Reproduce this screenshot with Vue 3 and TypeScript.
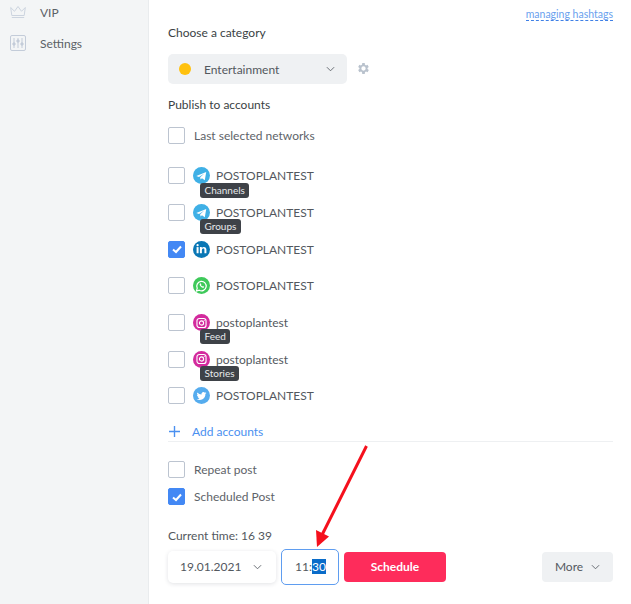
<script setup lang="ts">
interface Account { id: number; name: string; net: string; tag?: string; checked?: boolean }
const accounts: Account[] = [
  { id: 1, name: 'POSTOPLANTEST', net: 'telegram', tag: 'Channels' },
  { id: 2, name: 'POSTOPLANTEST', net: 'telegram', tag: 'Groups' },
  { id: 3, name: 'POSTOPLANTEST', net: 'linkedin', checked: true },
  { id: 4, name: 'POSTOPLANTEST', net: 'whatsapp' },
  { id: 5, name: 'postoplantest', net: 'instagram', tag: 'Feed' },
  { id: 6, name: 'postoplantest', net: 'instagram', tag: 'Stories' },
  { id: 7, name: 'POSTOPLANTEST', net: 'twitter' }
]
</script>

<template>
  <div class="page">
    <aside class="sidebar">
      <div class="nav-item vip">
        <svg class="nav-icon" viewBox="0 0 16 16" width="16" height="16" fill="none" stroke="#ccd4df" stroke-width="1">
          <path d="M.7 3.500 4.500 7.300 8 2.500 11.500 7.300 15.300 3.500 14.200 11.500H1.800Z" />
          <path d="M1.800 13.500H14.200" />
        </svg>
        <span>VIP</span>
      </div>
      <div class="nav-item">
        <svg class="nav-icon" viewBox="0 0 16 16" width="16" height="16" fill="none" stroke="#c3ccd9" stroke-width="1">
          <rect x="0.500" y="0.500" width="15" height="15" rx="1.500" />
          <path d="M4 3V13M8 3V13M12 3V13" />
          <circle cx="4" cy="9" r="1.200" fill="#c3ccd9" />
          <circle cx="8" cy="6" r="1.200" fill="#c3ccd9" />
          <circle cx="12" cy="9" r="1.200" fill="#c3ccd9" />
        </svg>
        <span>Settings</span>
      </div>
    </aside>

    <main class="main">
      <div class="hash-row"><a class="hash-link">managing hashtags</a></div>
      <div class="section-title category-title">Choose a category</div>
      <div class="category-row">
        <div class="select">
          <span class="dot"></span>
          <span class="select-label">Entertainment</span>
          <svg class="chev" viewBox="0 0 10 6" width="9" height="6" fill="none" stroke="#5b6168" stroke-width="1"><path d="M1 1 5 5 9 1" /></svg>
        </div>
        <svg class="gear" viewBox="2.500 1.500 21 21" width="13" height="13" fill="#b9c2cd">
          <path d="M19.400 13a7.500 7.500 0 0 0 0-2l2.100-1.600-2-3.400-2.500 1a7.500 7.500 0 0 0-1.700-1L15 3.300h-4l-.4 2.700a7.500 7.500 0 0 0-1.700 1l-2.500-1-2 3.400L6.500 11a7.500 7.500 0 0 0 0 2l-2.100 1.600 2 3.400 2.500-1a7.500 7.500 0 0 0 1.700 1l.4 2.700h4l.4-2.700a7.500 7.500 0 0 0 1.700-1l2.500 1 2-3.400ZM13 15.500a3.500 3.500 0 1 1 0-7 3.500 3.500 0 0 1 0 7Z" />
        </svg>
      </div>
      <div class="section-title publish-title">Publish to accounts</div>
      <div class="check-row last-row">
        <span class="box"></span>
        <span class="check-label">Last selected networks</span>
      </div>

      <ul class="accounts">
        <li v-for="a in accounts" :key="a.id" class="account">
          <span class="box" :class="{ on: a.checked }">
            <svg v-if="a.checked" viewBox="0 0 12 12" width="12" height="12" fill="none" stroke="#fff" stroke-width="2"><path d="M2 6.500 5 9 10 3.500" /></svg>
          </span>
          <span class="net" :class="a.net">
            <svg v-if="a.net === 'telegram'" viewBox="0 0 18 18" width="18" height="18"><path d="M3.500 9 14 4.800 12.500 13.500 9.500 11.300 8 12.800 7.600 10.400 12 6.300 6.300 10 Z" fill="#fff" /></svg>
            <svg v-else-if="a.net === 'linkedin'" viewBox="0 0 18 18" width="18" height="18" fill="#fff"><rect x="3.800" y="7" width="2.100" height="6.500" /><circle cx="4.850" cy="5" r="1.200" /><path d="M7.300 7h2v1c.5-.8 1.300-1.200 2.200-1.200 1.800 0 2.700 1.100 2.700 3v3.700h-2.100v-3.400c0-1-.4-1.500-1.200-1.500s-1.500.6-1.500 1.600v3.300H7.300Z" /></svg>
            <svg v-else-if="a.net === 'whatsapp'" viewBox="0 0 18 18" width="18" height="18" fill="none" stroke="#fff" stroke-width="1.300"><path d="M3.600 14.400 4.500 11.300A5 5 0 1 1 6.600 13.500Z" /><path d="M7 6.800c0 2 1.800 3.900 4 4.200l.8-1.200-1.300-.8-.6.500c-.7-.3-1.200-.9-1.500-1.500l.5-.6-.7-1.300Z" fill="#fff" stroke="none" /></svg>
            <svg v-else-if="a.net === 'instagram'" viewBox="0 0 18 18" width="18" height="18" fill="none" stroke="#fff" stroke-width="1.200"><rect x="4.200" y="4.200" width="9.600" height="9.600" rx="2.500" /><circle cx="9" cy="9" r="2.200" /><circle cx="11.900" cy="6.100" r=".6" fill="#fff" stroke="none" /></svg>
            <svg v-else viewBox="0 0 18 18" width="18" height="18"><path d="M14.300 5.900c-.4.200-.8.300-1.200.3.400-.3.800-.7.900-1.200-.4.200-.9.400-1.400.5a2.100 2.100 0 0 0-3.600 1.900A6 6 0 0 1 4.600 5.200a2.100 2.100 0 0 0 .6 2.800c-.3 0-.7-.1-1-.3 0 1 .7 1.900 1.700 2.100-.3.100-.6.100-1 0 .3.800 1.100 1.400 2 1.500A4.300 4.300 0 0 1 3.800 12.200a6 6 0 0 0 9.300-5.300c.5-.3.900-.6 1.200-1Z" fill="#fff" /></svg>
          </span>
          <span class="acc-name">{{ a.name }}</span>
          <span v-if="a.tag" class="tag">{{ a.tag }}</span>
        </li>
      </ul>

      <div class="add-row">
        <svg viewBox="0 0 12 12" width="11" height="11" stroke="#4a90f0" stroke-width="1.500"><path d="M6 0V12M0 6H12" /></svg>
        <span>Add accounts</span>
      </div>

      <div class="check-row repeat-row">
        <span class="box"></span>
        <span class="check-label">Repeat post</span>
      </div>
      <div class="check-row sched-row">
        <span class="box on">
          <svg viewBox="0 0 12 12" width="12" height="12" fill="none" stroke="#fff" stroke-width="2"><path d="M2 6.500 5 9 10 3.500" /></svg>
        </span>
        <span class="check-label">Scheduled Post</span>
      </div>

      <div class="current-time">Current time: 16 39</div>
      <div class="controls">
        <div class="date">
          <span>19.01.2021</span>
          <svg viewBox="0 0 10 6" width="9" height="6" fill="none" stroke="#5b6168" stroke-width="1"><path d="M1 1 5 5 9 1" /></svg>
        </div>
        <div class="time">11:<span class="sel">30</span></div>
        <button class="schedule" type="button">Schedule</button>
        <button class="more" type="button">
          <span>More</span>
          <svg viewBox="0 0 10 6" width="9" height="6" fill="none" stroke="#5b6168" stroke-width="1"><path d="M1 1 5 5 9 1" /></svg>
        </button>
      </div>
    </main>

    <svg class="arrow" viewBox="0 0 631 604" width="631" height="604">
      <path d="M366.500 446 322 535" stroke="#f5101c" stroke-width="3" fill="none" />
      <path d="M317 547 316 530 329 536.500Z" fill="#f5101c" />
    </svg>
  </div>
</template>

<style scoped>
.page {
  position: relative;
  display: flex;
  width: 631px;
  height: 604px;
  overflow: hidden;
  background: #fff;
  font-family: Lato, "Liberation Sans", sans-serif;
  color: #3f4449;
  font-size: 12px;
}
.sidebar {
  width: 149px;
  flex: none;
  box-sizing: border-box;
  background: #f3f5f6;
  border-right: 1px solid #e9ecee;
}
.nav-item {
  display: flex;
  align-items: center;
  gap: 14px;
  height: 24px;
  margin-bottom: 7px;
  padding-left: 10px;
  color: #5b6166;
}
.main {
  flex: 1;
  box-sizing: border-box;
  padding: 0 18px 0 19px;
}
.hash-row {
  display: flex;
  justify-content: flex-end;
  height: 21px;
  padding-top: 7px;
  box-sizing: border-box;
}
.hash-link {
  height: 13px;
  line-height: 14px;
  font-size: 10.5px;
  color: #6a9fee;
  border-bottom: 1px dashed #3f80e6;
}
.section-title {
  height: 18px;
  line-height: 18px;
  color: #3a3f44;
}
.category-title { margin-top: 3px; }
.category-row {
  display: flex;
  align-items: center;
  gap: 10px;
  margin-top: 12px;
}
.select {
  display: flex;
  align-items: center;
  width: 179px;
  height: 30px;
  box-sizing: border-box;
  padding: 0 12px 0 11px;
  border-radius: 5px;
  background: #eff1f3;
}
.dot {
  width: 12px;
  height: 12px;
  border-radius: 50%;
  background: #ffc10e;
}
.select-label { flex: 1; margin-left: 13px; color: #53585e; }
.gear { margin-top: -2px; }
.publish-title { margin-top: 12px; }
.check-row {
  display: flex;
  align-items: center;
  gap: 9px;
  height: 18px;
}
.last-row { margin-top: 12px; }
.box {
  display: inline-flex;
  align-items: center;
  justify-content: center;
  flex: none;
  width: 17px;
  height: 17px;
  box-sizing: border-box;
  border: 1px solid #bcc4d0;
  border-radius: 2px;
  background: #fff;
}
.box.on { background: #4388f4; border-color: #4388f4; }
.check-label { color: #5e6369; }
.accounts {
  list-style: none;
  margin: 13.5px 0 0;
  padding: 0;
}
.account {
  position: relative;
  display: flex;
  align-items: center;
  height: 36.7px;
}
.net {
  display: inline-flex;
  flex: none;
  width: 17px;
  height: 17px;
  margin-left: 8px;
  align-items: center;
  justify-content: center;
  border-radius: 50%;
  overflow: hidden;
}
.telegram { background: #3fb0e6; }
.linkedin { background: #0a77b5; }
.whatsapp { background: #3ec95a; }
.instagram { background: #d32a9d; }
.twitter { background: #55acee; }
.acc-name { margin-left: 6px; color: #53585e; }
.tag {
  position: absolute;
  left: 32px;
  top: 25px;
  height: 15px;
  line-height: 15px;
  padding: 0 4.5px;
  border-radius: 3px;
  background: #3e4248;
  color: #e8eaec;
  font-size: 10px;
}
.add-row {
  display: flex;
  align-items: center;
  gap: 12px;
  height: 19px;
  margin-top: 8.5px;
  padding-left: 1px;
  border-bottom: 1px solid #eef0f2;
  box-sizing: border-box;
  color: #4a90f0;
}
.repeat-row { margin-top: 19px; }
.sched-row { margin-top: 9px; }
.current-time {
  height: 16px;
  line-height: 16px;
  margin-top: 22px;
  color: #53585e;
}
.controls {
  display: flex;
  align-items: center;
  margin-top: 5px;
}
.date {
  display: flex;
  align-items: center;
  justify-content: space-between;
  width: 108px;
  height: 32px;
  box-sizing: border-box;
  padding: 0 14px 0 12px;
  border-radius: 5px;
  background: #fff;
  box-shadow: 0 1px 4px rgba(40, 50, 70, 0.14);
  color: #53585e;
}
.time {
  width: 58px;
  height: 36px;
  line-height: 34px;
  box-sizing: border-box;
  margin-left: 5px;
  padding-left: 13px;
  border: 1px solid #5f9df0;
  border-radius: 5px;
  color: #53585e;
}
.sel { background: #0a6cc9; color: #fff; }
.schedule {
  width: 102px;
  height: 30px;
  margin-left: 5px;
  border: 0;
  border-radius: 4px;
  background: #fe2c5b;
  color: #fff;
  font: 700 12px Lato, "Liberation Sans", sans-serif;
}
.more {
  display: flex;
  align-items: center;
  justify-content: center;
  gap: 8px;
  width: 71px;
  height: 30px;
  margin-left: auto;
  border: 0;
  border-radius: 4px;
  background: #eff1f3;
  color: #54595f;
  font: 12px Lato, "Liberation Sans", sans-serif;
}
.arrow {
  position: absolute;
  left: 0;
  top: 0;
  pointer-events: none;
}
</style>
